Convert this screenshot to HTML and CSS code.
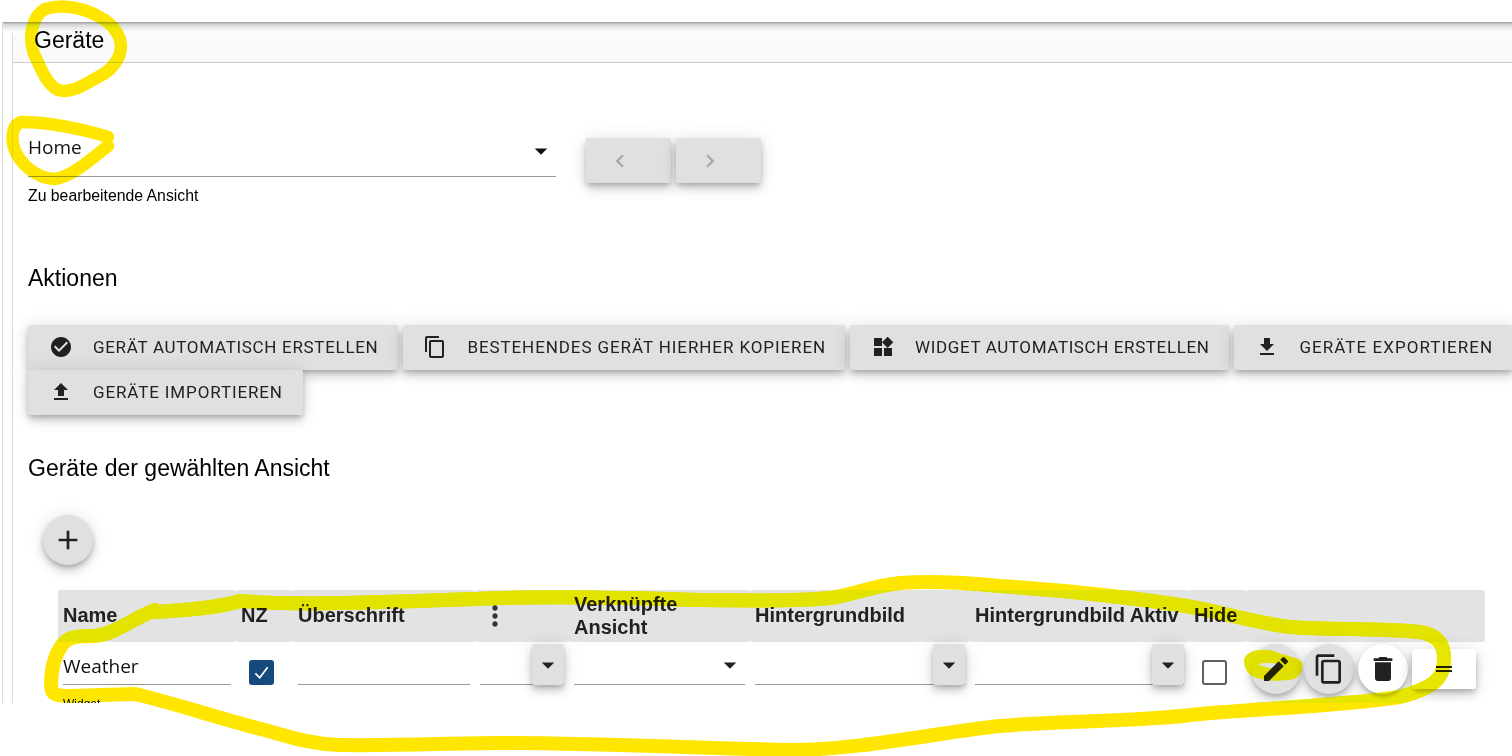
FILE: index.html
```html
<!DOCTYPE html>
<html lang="de">
<head>
    <meta charset="UTF-8">
    <meta name="viewport" content="width=device-width, initial-scale=1.0">
    <title>Geräte</title>
    <link rel="stylesheet" href="styles.css">
</head>
<body>
    <svg class="sprite" xmlns="http://www.w3.org/2000/svg">
        <symbol id="i-check" viewBox="0 0 24 24"><path d="M12 2C6.48 2 2 6.48 2 12s4.48 10 10 10 10-4.48 10-10S17.52 2 12 2zm-2 15l-5-5 1.41-1.41L10 14.17l7.59-7.59L19 8l-9 9z"/></symbol>
        <symbol id="i-copy" viewBox="0 0 24 24"><path d="M16 1H4c-1.1 0-2 .9-2 2v14h2V3h12V1zm3 4H8c-1.1 0-2 .9-2 2v14c0 1.1.9 2 2 2h11c1.1 0 2-.9 2-2V7c0-1.1-.9-2-2-2zm0 16H8V7h11v14z"/></symbol>
        <symbol id="i-widgets" viewBox="0 0 24 24"><path d="M13 13v8h8v-8h-8zM3 21h8v-8H3v8zM3 3v8h8V3H3zm13.66-1.31L11 7.34 16.66 13l5.66-5.66-5.66-5.65z"/></symbol>
        <symbol id="i-download" viewBox="0 0 24 24"><path d="M19 9h-4V3H9v6H5l7 7 7-7zM5 18v2h14v-2H5z"/></symbol>
        <symbol id="i-upload" viewBox="0 0 24 24"><path d="M9 16h6v-6h4l-7-7-7 7h4zm-4 2h14v2H5z"/></symbol>
        <symbol id="i-add" viewBox="0 0 24 24"><path d="M19 13h-6v6h-2v-6H5v-2h6V5h2v6h6v2z"/></symbol>
        <symbol id="i-more" viewBox="0 0 24 24"><path d="M12 8c1.1 0 2-.9 2-2s-.9-2-2-2-2 .9-2 2 .9 2 2 2zm0 2c-1.1 0-2 .9-2 2s.9 2 2 2 2-.9 2-2-.9-2-2-2zm0 6c-1.1 0-2 .9-2 2s.9 2 2 2 2-.9 2-2-.9-2-2-2z"/></symbol>
        <symbol id="i-edit" viewBox="0 0 24 24"><path d="M3 17.25V21h3.75L17.81 9.94l-3.75-3.75L3 17.25zM20.71 7.04c.39-.39.39-1.02 0-1.41l-2.34-2.34c-.39-.39-1.02-.39-1.41 0l-1.83 1.83 3.75 3.75 1.83-1.83z"/></symbol>
        <symbol id="i-delete" viewBox="0 0 24 24"><path d="M6 19c0 1.1.9 2 2 2h8c1.1 0 2-.9 2-2V7H6v12zM19 4h-3.5l-1-1h-5l-1 1H5v2h14V4z"/></symbol>
        <symbol id="i-drag" viewBox="0 0 24 24"><path d="M20 9H4v2h16V9zM4 15h16v-2H4v2z"/></symbol>
        <symbol id="i-drop" viewBox="0 0 24 24"><path d="M7 10l5 5 5-5z"/></symbol>
        <symbol id="i-left" viewBox="0 0 24 24"><path d="M15.41 7.41L14 6l-6 6 6 6 1.41-1.41L10.83 12z"/></symbol>
        <symbol id="i-right" viewBox="0 0 24 24"><path d="M10 6L8.59 7.41 13.17 12l-4.58 4.59L10 18l6-6z"/></symbol>
    </svg>

    <div class="window">
        <div class="top-shadow"></div>
        <div class="panel">
            <h1 class="title-bar">Geräte</h1>

            <section class="view-select">
                <div>
                    <div class="select-box">
                        <span>Home</span>
                        <svg class="icon drop"><use href="#i-drop"/></svg>
                    </div>
                    <p class="helper">Zu bearbeitende Ansicht</p>
                </div>
                <div class="nav-buttons">
                    <button class="btn nav"><svg class="icon"><use href="#i-left"/></svg></button>
                    <button class="btn nav"><svg class="icon"><use href="#i-right"/></svg></button>
                </div>
            </section>

            <h2 class="section-title actions-title">Aktionen</h2>
            <div class="action-list">
                <button class="btn action a-create"><svg class="icon"><use href="#i-check"/></svg>Gerät automatisch erstellen</button>
                <button class="btn action a-copy"><svg class="icon"><use href="#i-copy"/></svg>Bestehendes Gerät hierher kopieren</button>
                <button class="btn action a-widget"><svg class="icon"><use href="#i-widgets"/></svg>Widget automatisch erstellen</button>
                <button class="btn action a-export"><svg class="icon"><use href="#i-download"/></svg>Geräte exportieren</button>
                <button class="btn action a-import"><svg class="icon"><use href="#i-upload"/></svg>Geräte importieren</button>
            </div>

            <h2 class="section-title devices-title">Geräte der gewählten Ansicht</h2>
            <button class="round add"><svg class="icon big"><use href="#i-add"/></svg></button>

            <table class="devices">
                <colgroup>
                    <col class="c-name"><col class="c-nz"><col class="c-title"><col class="c-more">
                    <col class="c-view"><col class="c-bg"><col class="c-bg2"><col class="c-nz"><col class="c-actions">
                </colgroup>
                <thead>
                    <tr>
                        <th>Name</th>
                        <th>NZ</th>
                        <th>Überschrift</th>
                        <th class="more"><svg class="icon big"><use href="#i-more"/></svg></th>
                        <th>Verknüpfte Ansicht</th>
                        <th>Hintergrundbild</th>
                        <th>Hintergrundbild Aktiv</th>
                        <th>Hide</th>
                        <th></th>
                    </tr>
                </thead>
                <tbody>
                    <tr>
                        <td>
                            <div class="field">Weather</div>
                            <div class="field-label">Widget</div>
                        </td>
                        <td class="check-cell">
                            <span class="checkbox checked">
                                <svg viewBox="0 0 24 24"><path d="M5 13l5 5L19 6"/></svg>
                            </span>
                        </td>
                        <td><div class="field"></div></td>
                        <td><div class="field"><button class="btn drop-btn"><svg class="icon drop"><use href="#i-drop"/></svg></button></div></td>
                        <td><div class="field"><svg class="icon drop plain-drop"><use href="#i-drop"/></svg></div></td>
                        <td><div class="field"><button class="btn drop-btn"><svg class="icon drop"><use href="#i-drop"/></svg></button></div></td>
                        <td><div class="field"><button class="btn drop-btn"><svg class="icon drop"><use href="#i-drop"/></svg></button></div></td>
                        <td class="check-cell"><span class="checkbox"></span></td>
                        <td>
                            <div class="row-actions">
                                <button class="round"><svg class="icon big"><use href="#i-edit"/></svg></button>
                                <button class="round"><svg class="icon big"><use href="#i-copy"/></svg></button>
                                <button class="round white"><svg class="icon big"><use href="#i-delete"/></svg></button>
                                <button class="btn drag"><svg class="icon"><use href="#i-drag"/></svg></button>
                            </div>
                        </td>
                    </tr>
                </tbody>
            </table>
        </div>
        <div class="blue-strip"></div>
    </div>

    <!-- yellow highlighter drawn over the screenshot -->
    <svg class="marker" viewBox="0 0 1512 756" xmlns="http://www.w3.org/2000/svg">
        <defs>
            <path id="big-loop" d="M155 610 C130 620 115 634 95 636 C75 636 68 637 62 645 C54 656 51 670 51 685 C51 695 56 696 70 696 L135 694 C170 702 225 720 265 730 C290 737 310 744 340 745 C400 746 450 743 500 743 C600 743 700 748 790 750 C860 750 940 732 1000 726 C1070 720 1140 722 1200 714 C1270 708 1340 706 1400 697 C1432 688 1443 680 1444 662 C1445 645 1438 635 1420 632 C1380 628 1330 630 1290 627 C1250 622 1215 610 1180 605 C1120 596 1060 590 1000 586 C970 583 930 581 900 583 C870 586 850 596 830 598 C790 602 740 600 700 600 C640 598 560 596 500 598 C450 600 400 602 340 603 C300 604 265 603 240 601 C225 606 190 610 155 612"/>
            <clipPath id="green-zone">
                <rect x="58" y="590" width="1427" height="52"/>
                <rect x="1245" y="640" width="267" height="63"/>
            </clipPath>
        </defs>
        <path class="stroke" d="M45 9 C70 2 92 12 105 20 C115 27 121 38 121 46 C121 58 112 70 100 76 C85 84 72 94 58 90 C46 84 40 66 34 54 C28 38 32 16 45 9"/>
        <path class="stroke" d="M108 137 C80 128 45 122 22 122 C12 124 11 138 14 148 C20 165 38 179 55 179 C72 177 92 158 108 146"/>
        <use href="#big-loop" class="stroke thick"/>
        <use href="#big-loop" class="stroke thick green" clip-path="url(#green-zone)"/>
        <path class="blob" fill-rule="evenodd" d="M1244 660 C1246 650 1262 648 1274 651 C1284 656 1296 656 1302 662 C1304 672 1298 680 1288 680 C1275 682 1260 680 1252 676 C1246 672 1244 666 1244 660z M1258 664 C1265 668 1275 670 1284 666 C1275 663 1266 662 1258 664z"/>
    </svg>
</body>
</html>
```

FILE: styles.css
```css
/* Page */
body {
    margin: 0;
    background: #fff;
    color: #000;
    font-family: 'Liberation Sans', Arial, sans-serif;
}

.sprite {
    display: none;
}

.icon {
    display: block;
    width: 24px;
    height: 24px;
    fill: currentColor;
    flex: none;
}

.icon.big {
    width: 32px;
    height: 32px;
}

.icon.drop {
    width: 30px;
    height: 30px;
}

/* Cut off window, the screenshot ends at 703px */
.window {
    position: relative;
    height: 681px;
    margin: 22px 0 0 2px;
    border-left: 1px solid #dcdcdc;
    overflow: hidden;
}

.top-shadow {
    height: 11px;
    background: linear-gradient(#9b9b9b, #d9d9d9 25%, #f4f4f4 70%, #fff);
}

.blue-strip {
    position: absolute;
    left: -3px;
    top: 631px;
    width: 2px;
    height: 50px;
    background: #3b9bd6;
}

.panel {
    margin-left: 9px;
    border-left: 1px solid #dcdcdc;
    width: 1500px;
}

.title-bar {
    margin: 0;
    height: 29px;
    padding-left: 21px;
    font-size: 23px;
    font-weight: normal;
    line-height: 15px;
    background: #fafafa;
    border-bottom: 1px solid #ccc;
    border-top-left-radius: 4px;
    overflow: visible;
}

/* Buttons */
.btn {
    display: inline-flex;
    align-items: center;
    justify-content: center;
    padding: 0;
    border: none;
    border-radius: 2px;
    background: #e0e0e0;
    color: #212121;
    box-shadow: 0 3px 5px -1px rgba(0, 0, 0, 0.2), 0 6px 10px 0 rgba(0, 0, 0, 0.14), 0 1px 18px 0 rgba(0, 0, 0, 0.12);
    font-family: Roboto, sans-serif;
}

.round {
    display: flex;
    align-items: center;
    justify-content: center;
    width: 50px;
    height: 50px;
    padding: 0;
    border: none;
    border-radius: 50%;
    background: #e0e0e0;
    color: #212121;
    box-shadow: 0 3px 5px -1px rgba(0, 0, 0, 0.2), 0 6px 10px 0 rgba(0, 0, 0, 0.14), 0 1px 18px 0 rgba(0, 0, 0, 0.12);
}

.round.white {
    margin-left: 1px;
    background: #fff;
}

/* View select */
.view-select {
    display: flex;
    align-items: flex-start;
    gap: 30px;
    padding: 65px 0 0 15px;
}

.select-box {
    display: flex;
    justify-content: space-between;
    align-items: center;
    width: 528px;
    height: 48px;
    border-bottom: 1px solid #999;
    font-family: 'Open Sans', sans-serif;
    font-size: 19px;
    color: #111;
}

.select-box span {
    margin-top: -11px;
}

.select-box .drop {
    margin-top: -3px;
}

.helper {
    margin: 10px 0 0;
    font-size: 15.8px;
    line-height: 17px;
}

.nav-buttons {
    display: flex;
    gap: 5px;
    margin-top: 10px;
}

.btn.nav {
    width: 85px;
    height: 45px;
    padding-right: 18px;
    color: #a6a6a6;
}

.btn.nav .icon {
    width: 26px;
    height: 26px;
}

/* Section headers */
.section-title {
    margin: 0;
    padding-left: 15px;
    font-size: 23px;
    font-weight: normal;
    line-height: 27px;
}

.actions-title {
    margin-top: 61px;
}

.devices-title {
    margin-top: 40px;
}

/* Action buttons */
.action-list {
    display: flex;
    flex-wrap: wrap;
    column-gap: 5px;
    padding: 33px 0 0 15px;
    width: 1490px;
}

.btn.action {
    height: 45px;
    padding: 0 20px 2px 21px;
    gap: 20px;
    font-size: 17px;
    text-transform: uppercase;
    white-space: nowrap;
}

.btn.action .icon {
    margin-top: 1px;
}

.a-create { letter-spacing: 0.69px; }
.a-widget { letter-spacing: 0.61px; }
.a-export { letter-spacing: 1.04px; }
.a-import { letter-spacing: 0.87px; }

.btn.action.a-copy {
    padding: 0 19px 2px 20px;
    letter-spacing: 0.91px;
}

.round.add {
    margin: 33px 0 0 30px;
}

/* Device table */
.devices {
    margin: 25px 0 0 45px;
    width: 1427px;
    table-layout: fixed;
    border-collapse: collapse;
}

.c-name { width: 178px; }
.c-nz { width: 57px; }
.c-title { width: 182px; }
.c-more { width: 94px; }
.c-view { width: 181px; }
.c-bg { width: 220px; }
.c-bg2 { width: 219px; }
.c-actions { width: 239px; }

.devices th {
    box-sizing: border-box;
    height: 52px;
    padding: 0 5px 1px;
    background: #e3e3e3;
    border-radius: 2px;
    color: #212121;
    font-size: 20px;
    line-height: 23px;
    font-weight: bold;
    text-align: left;
}

.devices th.more {
    color: #333;
}

.devices th.more .icon {
    margin-left: -1px;
}

.devices td {
    padding: 0 5px;
    vertical-align: top;
}

.field {
    display: flex;
    justify-content: flex-end;
    align-items: flex-start;
    box-sizing: border-box;
    height: 43px;
    border-bottom: 1px solid #999;
    font-family: 'Open Sans', sans-serif;
    font-size: 19px;
    line-height: 48px;
}

td:first-child .field {
    justify-content: flex-start;
    color: #111;
}

.field-label {
    margin-top: 12px;
    font-size: 12px;
    line-height: 14px;
}

.btn.drop-btn {
    width: 32px;
    height: 41px;
    margin-top: 2px;
}

.plain-drop {
    margin: 8px 0 0;
    color: #212121;
}

.check-cell {
    text-align: left;
}

.checkbox {
    display: block;
    box-sizing: border-box;
    width: 25px;
    height: 25px;
    margin: 18px 0 0 8px;
    border: 2px solid #5f5f5f;
    border-radius: 3px;
    background: #fff;
}

.checkbox.checked {
    border-color: #174a7c;
    background: #174a7c;
}

.checkbox svg {
    display: block;
    fill: none;
    stroke: #fff;
    stroke-width: 2;
}

.row-actions {
    display: flex;
    align-items: flex-start;
    gap: 3px;
    padding: 2px 0 0;
}

.btn.drag {
    width: 64px;
    height: 40px;
    margin: 5px 0 0 1px;
    background: #fff;
}

/* Highlighter */
.marker {
    position: absolute;
    left: 0;
    top: 0;
    width: 1512px;
    height: 756px;
    mix-blend-mode: darken;
    pointer-events: none;
}

.stroke {
    fill: none;
    stroke: #ffe600;
    stroke-width: 12.5;
    stroke-linecap: round;
    stroke-linejoin: round;
}

.stroke.thick {
    stroke-width: 14;
}

.stroke.green {
    stroke: #e6e600;
}

.blob {
    fill: #e2e200;
}
```
